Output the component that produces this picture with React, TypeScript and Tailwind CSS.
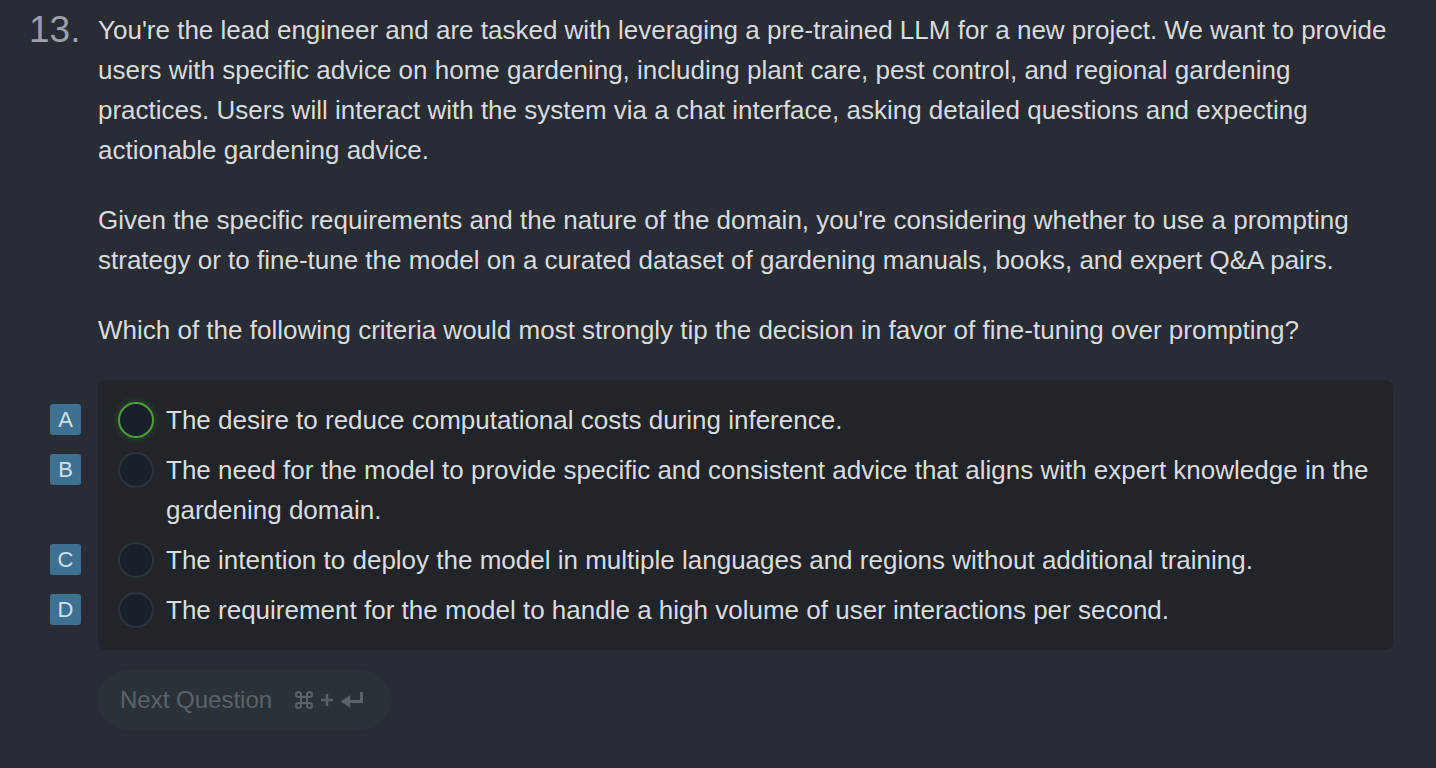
import React from "react";

const options = [
  { key: "A", text: "The desire to reduce computational costs during inference.", selected: true, h: "h-[40px]" },
  {
    key: "B",
    text: "The need for the model to provide specific and consistent advice that aligns with expert knowledge in the gardening domain.",
    h: "h-[80px]",
  },
  {
    key: "C",
    text: "The intention to deploy the model in multiple languages and regions without additional training.",
    h: "h-[40px]",
  },
  {
    key: "D",
    text: "The requirement for the model to handle a high volume of user interactions per second.",
    h: "h-[40px]",
  },
];

export default function App() {
  return (
    <div
      className="min-h-[768px] w-full bg-[#282d35] text-[#d9dbde]"
      style={{ fontFamily: '"Liberation Sans", Arial, sans-serif' }}
    >
      <div className="flex pt-[10px]">
        <div className="w-[98px] shrink-0 pl-[29px] text-[37px] leading-[40px] text-[#9ca1a7]">13.</div>
        <div className="w-[1300px] text-[26px] leading-[40px]">
          <p>
            You're the lead engineer and are tasked with leveraging a pre-trained LLM for a new project. We want to provide
            users with specific advice on home gardening, including plant care, pest control, and regional gardening
            practices. Users will interact with the system via a chat interface, asking detailed questions and expecting
            actionable gardening advice.
          </p>
          <p className="mt-[30px]">
            Given the specific requirements and the nature of the domain, you're considering whether to use a prompting
            strategy or to fine-tune the model on a curated dataset of gardening manuals, books, and expert Q&amp;A pairs.
          </p>
          <p className="mt-[30px]">
            Which of the following criteria would most strongly tip the decision in favor of fine-tuning over prompting?
          </p>
        </div>
      </div>

      <div className="mt-[30px] flex">
        <div className="flex w-[98px] shrink-0 flex-col items-start gap-[10px] pl-[50px] pt-[20px]">
          {options.map((o) => (
            <div key={o.key} className={o.h}>
              <div className="mt-[4px] flex h-[31px] w-[31px] items-center justify-center rounded-[3px] bg-[#3e7191] text-[22px] text-[#cfe0ea]">
                {o.key}
              </div>
            </div>
          ))}
        </div>
        <div className="flex w-[1295px] flex-col gap-[10px] rounded-[8px] bg-[#212529] px-[20px] py-[20px]">
          {options.map((o) => (
            <div key={o.key} className="flex items-start gap-[12px]">
              <div
                className={
                  o.selected
                    ? "mt-[2px] h-[36px] w-[36px] shrink-0 rounded-full border-2 border-[#4f9a3c] bg-[#18202a] shadow-[0_0_8px_rgba(80,160,60,0.35)]"
                    : "mt-[2px] h-[36px] w-[36px] shrink-0 rounded-full border-2 border-[#2b333b] bg-[#18202a]"
                }
              />
              <div className="text-[26px] leading-[40px] text-[#dadcdf]">{o.text}</div>
            </div>
          ))}
        </div>
      </div>

      <div className="mt-[20px] pl-[98px]">
        <div className="inline-flex h-[60px] items-center gap-[22px] rounded-full bg-[#2a3238] pl-[22px] pr-[27px] text-[#5b6269]">
          <span className="text-[24px]">Next Question</span>
          <span className="flex items-center gap-[6px]">
            <svg width="20" height="18" viewBox="0 0 20 18" fill="none" stroke="currentColor" strokeWidth="2">
              <rect x="7" y="6" width="6" height="6" />
              <path d="M7 6H4.5A2.5 2.5 0 1 1 7 3.5V6M13 6V3.5A2.5 2.5 0 1 1 15.5 6H13M13 12h2.5a2.5 2.5 0 1 1-2.5 2.5V12M7 12v2.5A2.5 2.5 0 1 1 4.5 12H7" />
            </svg>
            <svg width="14" height="14" viewBox="0 0 14 14" stroke="currentColor" strokeWidth="2.5">
              <path d="M7 1v12M1 7h12" />
            </svg>
            <svg width="24" height="16" viewBox="0 0 24 16" fill="none" stroke="currentColor" strokeWidth="3">
              <path d="M21.5 0v9.5H9" />
              <path d="M10 3.5L1 9.5l9 6z" fill="currentColor" strokeWidth="0.5" />
            </svg>
          </span>
        </div>
      </div>
    </div>
  );
}
